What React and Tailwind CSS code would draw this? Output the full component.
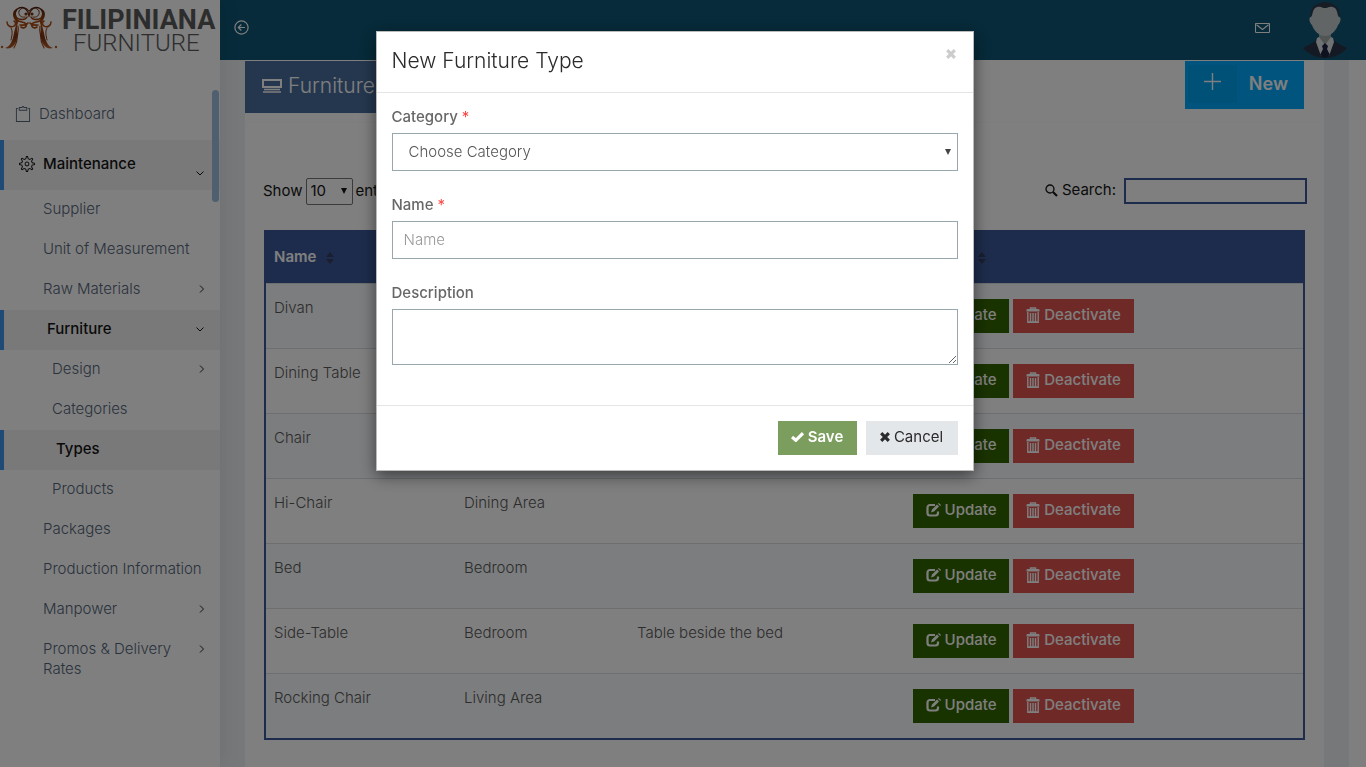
import { TfiClipboard, TfiSettings } from 'react-icons/tfi';

const menu = [
  { label: 'Supplier' },
  { label: 'Unit of Measurement' },
  { label: 'Raw Materials', arrow: 'right' },
  { label: 'Furniture', arrow: 'down', active: true },
  { label: 'Design', arrow: 'right', nested: true },
  { label: 'Categories', nested: true },
  { label: 'Types', nested: true, active: true },
  { label: 'Products', nested: true },
  { label: 'Packages' },
  { label: 'Production Information' },
  { label: 'Manpower', arrow: 'right' },
  { label: 'Promos & Delivery Rates', arrow: 'right' },
];

const rows = [
  ['Divan', 'Living Area', ''],
  ['Dining Table', 'Dining Area', ''],
  ['Chair', 'Dining Area', ''],
  ['Hi-Chair', 'Dining Area', ''],
  ['Bed', 'Bedroom', ''],
  ['Side-Table', 'Bedroom', 'Table beside the bed'],
  ['Rocking Chair', 'Living Area', ''],
];

function Ornament() {
  const half = (
    <g>
      <path d="M29 16C28 9 23 6 19 8c-5 3-5 9 0 11 4 1 7 0 8-2" strokeWidth="1.4" />
      <path d="M29 11c-2-4-8-4-10 0-1 4 2 7 6 6" strokeWidth="1" />
      <circle cx="26" cy="14" r="1.6" fill="url(#copper)" stroke="none" />
      <path d="M17 20c3 3 7 1 9 4 1 3-2 5-5 3M20 25c3 0 6 1 8-2" strokeWidth="1.6" />
      <path d="M7 22c0 4 4 6 7 4 2-1 2-4 0-5" strokeWidth="1.5" />
      <path d="M18 8c-6 2-6 8-3 12 2 4 0 8-1 13-1 7-4 14-9 15 6 2 11-3 12-10 1-6-1-11 1-15 1-5-5-8 0-15z" fill="url(#copper)" stroke="none" />
      <path d="M18 26c1 5-1 9-1 13 0 4-2 6-3 9" strokeWidth="1.2" />
      <path d="M11 28c2 3 1 8 0 12" strokeWidth="1" />
      <circle cx="2" cy="47" r="1.2" fill="url(#copper)" stroke="none" />
    </g>
  );
  return (
    <svg viewBox="0 0 58 54" className="h-[54px] w-[58px] shrink-0" fill="none" stroke="url(#copper)" strokeLinecap="round" aria-hidden="true">
      <defs>
        <linearGradient id="copper" gradientUnits="userSpaceOnUse" x1="0" y1="6" x2="0" y2="50">
          <stop offset="0" stopColor="#4a1f10" />
          <stop offset="0.4" stopColor="#b04c10" />
          <stop offset="0.7" stopColor="#7a3214" />
          <stop offset="1" stopColor="#c0642c" />
        </linearGradient>
      </defs>
      {half}
      <g transform="translate(58 0) scale(-1 1)">{half}</g>
    </svg>
  );
}

function Avatar() {
  return (
    <svg viewBox="0 0 46 56" className="h-14 w-[46px]" aria-hidden="true">
      <path d="M1 46c5-3 11-5 14-9h16c3 4 9 6 14 9-5 6-13 10-22 10S6 52 1 46z" fill="#283347" />
      <path d="M17 30h12v9l-6 7-6-7z" fill="#a3aaa8" />
      <path d="M15 36l-1 4 5 14h8l5-14-1-4-2-1-6 8-6-8z" fill="#dfe3e6" />
      <path d="M20 44l3-3 3 3-1 3 3 6-5 3-5-3 3-6z" fill="#1c2340" />
      <path d="M9 17C7 7 12 1 23 0c11 1 16 7 14 17l-2 4H11z" fill="#30394a" />
      <path d="M13 6c5-3 7 0 10 0s5-3 10 0c3 3 2 7 4 9 3 0 1 7-1 8-2 6-7 11-13 11S12 29 10 23c-2-1-4-8-1-8 2-2 1-6 4-9z" fill="#c5cacd" />
    </svg>
  );
}

function ChevronRight({ className = '' }) {
  return (
    <svg viewBox="0 0 6 8" className={`h-2 w-[6px] shrink-0 ${className}`} fill="none" stroke="currentColor" aria-hidden="true">
      <path d="M1 .5L4.500 4 1 7.500" />
    </svg>
  );
}

function ChevronDown({ className = '' }) {
  return (
    <svg viewBox="0 0 8 8" className={`h-2 w-2 shrink-0 ${className}`} fill="none" stroke="currentColor" aria-hidden="true">
      <path d="M.5 2.500L4 6l3.500-3.500" />
    </svg>
  );
}

function ArrowCircleIcon() {
  return (
    <svg viewBox="0 0 15 15" className="h-[15px] w-[15px]" fill="none" stroke="currentColor" strokeWidth="1.2" aria-hidden="true">
      <circle cx="7.500" cy="7.500" r="6.600" />
      <path d="M11 7.500H4.500M7.300 4.500l-3 3 3 3" />
    </svg>
  );
}

function MailIcon() {
  return (
    <svg viewBox="0 0 15 11" className="h-[11px] w-[15px]" fill="none" stroke="currentColor" strokeWidth="1.1" aria-hidden="true">
      <rect x=".5" y=".5" width="14" height="9" rx=".6" />
      <path d="M1.500 1.800L7.500 6.500l6-4.700" />
    </svg>
  );
}

function SortIcon() {
  return (
    <svg viewBox="0 0 10 12" className="h-3 w-[10px]" fill="#333f5c" aria-hidden="true">
      <path d="M1 5l4-5 4 5zM1 7h8l-4 5z" />
    </svg>
  );
}

function EditIcon() {
  return (
    <svg viewBox="0 0 15 14" className="h-[14px] w-[15px] shrink-0" aria-hidden="true">
      <path d="M9 2H4a2.500 2.500 0 0 0-2.500 2.500V10A2.500 2.500 0 0 0 4 12.500h5.500A2.500 2.500 0 0 0 12 10V8.500" fill="none" stroke="currentColor" strokeWidth="2.2" />
      <path d="M5 9.500l1-3 5-5L13 3.500l-5 5zM12 .8l.8-.8L15 2l-.9.900z" fill="currentColor" />
    </svg>
  );
}

function TrashIcon() {
  return (
    <svg viewBox="0 0 14 16" className="h-4 w-[14px] shrink-0" aria-hidden="true">
      <path d="M4.500 2.500V1h5v1.500" fill="none" stroke="currentColor" strokeWidth="1.4" />
      <path d="M.5 3q0-1 1-1h11q1 0 1 1v1.500H.5z" fill="currentColor" />
      <path d="M1.800 5v10.400h10.400V5M4.500 6v8.500M7 6v8.500M9.500 6v8.500M1.500 15h11" fill="none" stroke="currentColor" strokeWidth="1.4" />
    </svg>
  );
}

function SearchIcon() {
  return (
    <svg viewBox="0 0 13 13" className="h-[13px] w-[13px]" fill="none" stroke="currentColor" aria-hidden="true">
      <circle cx="5" cy="5" r="4" strokeWidth="1.300" />
      <path d="M8 8l4 4" strokeWidth="2.200" />
    </svg>
  );
}

function CrossIcon() {
  return (
    <svg viewBox="0 0 10 10" className="h-[10px] w-[10px] shrink-0" stroke="currentColor" strokeWidth="3.200" aria-hidden="true">
      <path d="M1.200 1.200l7.600 7.600M8.800 1.200L1.200 8.800" />
    </svg>
  );
}

function CheckIcon() {
  return (
    <svg viewBox="0 0 13 10" className="h-[10px] w-[13px] shrink-0" fill="none" stroke="currentColor" strokeWidth="3.200" aria-hidden="true">
      <path d="M1 5l3.800 3.300L12 1.200" />
    </svg>
  );
}

function Caret() {
  return (
    <svg viewBox="0 0 6 6" className="h-[6px] w-[6px]" fill="currentColor" aria-hidden="true">
      <path d="M0 0h6L3 6z" />
    </svg>
  );
}

function Sidebar() {
  return (
    <aside className="relative z-10 flex w-[220px] shrink-0 flex-col bg-white shadow-[1px_0_20px_rgba(0,0,0,0.08)]">
      <a href="#home" className="flex h-[60px] gap-1">
        <Ornament />
        <span className="flex flex-col pt-2 font-['Roboto',sans-serif] whitespace-nowrap text-[#5a5a5a]">
          <span className="text-[27px] leading-6 font-bold">FILIPINIANA</span>
          <span className="pl-[11px] text-[24px] leading-[22px] font-light">FURNITURE</span>
        </span>
      </a>
      <nav className="relative mt-[30px] leading-5 font-light text-[#54667a]">
        <a href="#dashboard" className="flex h-[50px] items-center gap-2 pb-[2px] pl-[15px]">
          <TfiClipboard className="h-4 w-4" />
          Dashboard
        </a>
        <a href="#maintenance" className="flex h-[50px] items-center border-l-4 border-[#4094ec] bg-[#f3f3f3] pr-4 pb-[2px] pl-[15px] font-medium text-[#151515]">
          <TfiSettings className="mr-2 h-4 w-4" />
          <span className="flex-1">Maintenance</span>
          <ChevronDown className="mt-[18px]" />
        </a>
        <ul>
          {menu.map((m) => (
            <li key={m.label}>
              <a
                href="#menu"
                className={`flex items-start pt-[9px] pb-[11px] ${m.active ? 'border-l-4 border-[#4094ec] bg-[#f3f3f3] pr-4 font-medium text-[#151515]' : 'pr-[15px]'} ${m.nested ? 'pl-[52px]' : 'pl-[43px]'}`}
              >
                <span className={m.arrow ? 'w-[130px]' : 'whitespace-nowrap'}>{m.label}</span>
                {m.arrow === 'right' && <ChevronRight className="mt-[6px] ml-auto text-[#222]" />}
                {m.arrow === 'down' && <ChevronDown className="mt-[6px] ml-auto" />}
              </a>
            </li>
          ))}
        </ul>
        <div className="absolute top-0 right-[1px] h-28 w-[7px] rounded-lg bg-[#9dc0e0]" />
      </nav>
    </aside>
  );
}

function DataTable() {
  const heads = ['Name', 'Category', 'Description', 'Actions'];
  const widths = ['w-[190px]', 'w-[173px]', 'w-[276px]', ''];
  return (
    <table className="w-full table-fixed border-separate border-spacing-0 border-2 border-[#3b5998] text-left">
      <thead>
        <tr className="bg-[#3b5998] text-white">
          {heads.map((h, i) => (
            <th key={h} className={`h-[51px] px-2 font-semibold ${widths[i]}`}>
              <span className="flex items-center gap-[9px]">
                {h}
                <SortIcon />
              </span>
            </th>
          ))}
        </tr>
      </thead>
      <tbody className="font-light text-[#595959]">
        {rows.map((r) => (
          <tr key={r[0]} className="odd:bg-[#f7fafc]">
            {r.map((c, i) => (
              <td key={i} className="border-t border-[#dadcde] px-2 pt-[14px] align-top leading-5">{c}</td>
            ))}
            <td className="border-t border-[#dadcde] px-2 py-[15px]">
              <div className="flex gap-1 font-medium text-white">
                <button className="flex h-[34px] w-24 items-center justify-center gap-1 bg-[#336600] pb-[2px]">
                  <EditIcon />
                  Update
                </button>
                <button className="flex h-[34px] w-[121px] items-center justify-center gap-1 bg-[#de534f] pb-[2px]">
                  <TrashIcon />
                  Deactivate
                </button>
              </div>
            </td>
          </tr>
        ))}
      </tbody>
    </table>
  );
}

function NewTypeDialog() {
  const field = 'w-full border border-[#98a6ad] bg-white font-light outline-none';
  return (
    <div className="fixed inset-0 z-20 flex items-start justify-center bg-black/50 pt-[31px] pr-[17px]">
      <form
        role="dialog"
        aria-labelledby="dialog-title"
        className="w-[598px] border border-[#bbb] bg-white text-[#676767] shadow-[0_5px_15px_rgba(0,0,0,0.5)]"
      >
        <div className="flex h-[61px] items-start justify-between border-b border-[#e5e5e5] px-[15px] pt-[14px]">
          <h4 id="dialog-title" className="text-[21px] leading-[30px] font-light text-[#2b2b2b]">New Furniture Type</h4>
          <button type="button" aria-label="Close" className="mt-[3px] mr-[2px] text-[#ccc]">
            <CrossIcon />
          </button>
        </div>
        <div className="flex flex-col gap-6 px-[15px] pt-[14px] pb-10">
          <div className="flex flex-col gap-[6px]">
            <label htmlFor="category" className="leading-5 font-medium">Category <span className="font-normal text-[#f44]">*</span></label>
            <div className="relative">
              <select id="category" className={`${field} h-[38px] appearance-none px-4 text-[#565656]`}>
                <option>Choose Category</option>
              </select>
              <span className="pointer-events-none absolute top-4 right-[7px] text-[#444]"><Caret /></span>
            </div>
          </div>
          <div className="flex flex-col gap-[6px]">
            <label htmlFor="name" className="leading-5 font-medium">Name <span className="font-normal text-[#f44]">*</span></label>
            <input id="name" placeholder="Name" className={`${field} h-[38px] px-[11px] pb-[2px] placeholder:text-[#999]`} />
          </div>
          <div className="flex flex-col gap-[6px]">
            <label htmlFor="description" className="leading-5 font-medium">Description</label>
            <textarea id="description" className={`${field} block h-14 resize px-[11px] pt-1`} />
          </div>
        </div>
        <div className="flex justify-end gap-[9px] border-t border-[#e5e5e5] p-[15px]">
          <button type="button" className="flex h-[34px] w-[79px] items-center justify-center gap-1 bg-[#7b9d5d] pb-[2px] font-semibold text-white">
            <CheckIcon />
            Save
          </button>
          <button type="button" className="flex h-[34px] w-[92px] items-center justify-center gap-1 bg-[#e4e7ea] pb-[2px] text-[#2b2b2b]">
            <CrossIcon />
            Cancel
          </button>
        </div>
      </form>
    </div>
  );
}

export default function App() {
  return (
    <div className="flex h-screen overflow-hidden bg-white font-['Inter',sans-serif] text-[15px]">
      <Sidebar />
      <div className="flex min-w-0 flex-1 flex-col">
        <header className="flex h-[60px] shrink-0 items-center justify-between bg-[#0e5674] pr-[18px] pl-[14px] text-white">
          <button aria-label="Collapse menu" className="mb-[5px]"><ArrowCircleIcon /></button>
          <div className="flex items-center gap-8">
            <button aria-label="Messages" className="mb-1"><MailIcon /></button>
            <button aria-label="Profile"><Avatar /></button>
          </div>
        </header>
        <div className="mr-[17px] flex min-h-0 flex-1 bg-[#edf0f4] px-[25px]">
          <main className="flex-1 bg-white pt-[1px]">
            <div className="flex h-[62px] items-start justify-between border-b border-[#fafafa] pr-5">
              <h3 className="flex h-[52px] items-center gap-[6px] bg-[#4a6f9e] pr-6 pb-[2px] pl-[17px] text-[21px] font-light text-white">
                <svg viewBox="0 0 20 14" className="h-[14px] w-5" fill="none" stroke="currentColor" aria-hidden="true">
                  <path d="M1 1h18v7H1z" strokeWidth="2" />
                  <path d="M2 10.500h16M1 13h18" strokeWidth="1.300" />
                </svg>
                Furniture Types
              </h3>
              <button className="flex h-12 items-center bg-[#00a8fb] pt-[1px] pr-4 pb-1 pl-[3px] text-[18px] font-semibold text-white">
                <span className="mr-3 flex h-[38px] w-[49px] items-center justify-center bg-[#00a2f1] pb-1">
                  <svg viewBox="0 0 17 17" className="h-[17px] w-[17px]" stroke="currentColor" strokeWidth="1.4" aria-hidden="true">
                    <path d="M8.500 0v17M0 8.500h17" />
                  </svg>
                </span>
                New
              </button>
            </div>
            <div className="flex items-start justify-between pt-[55px] pr-[17px] pb-[25px] pl-[18px] text-[#151515]">
              <label className="flex items-center gap-[3px]">
                <span>Show</span>
                <span className="relative">
                  <select className="h-[27px] w-[47px] appearance-none rounded-xs border border-[#777] bg-white pl-1 align-top">
                    <option>10</option>
                  </select>
                  <span className="pointer-events-none absolute top-[10px] right-[6px]"><Caret /></span>
                </span>
                <span>entries</span>
              </label>
              <label className="flex items-center">
                <span className="flex items-center gap-1 pr-2 pb-[2px]">
                  <SearchIcon />
                  Search:
                </span>
                <input type="search" className="h-[26px] w-[183px] border-2 border-[#3b5998] bg-white px-1 outline-none" />
              </label>
            </div>
            <div className="px-[19px]">
              <DataTable />
            </div>
          </main>
        </div>
      </div>
      <NewTypeDialog />
    </div>
  );
}
